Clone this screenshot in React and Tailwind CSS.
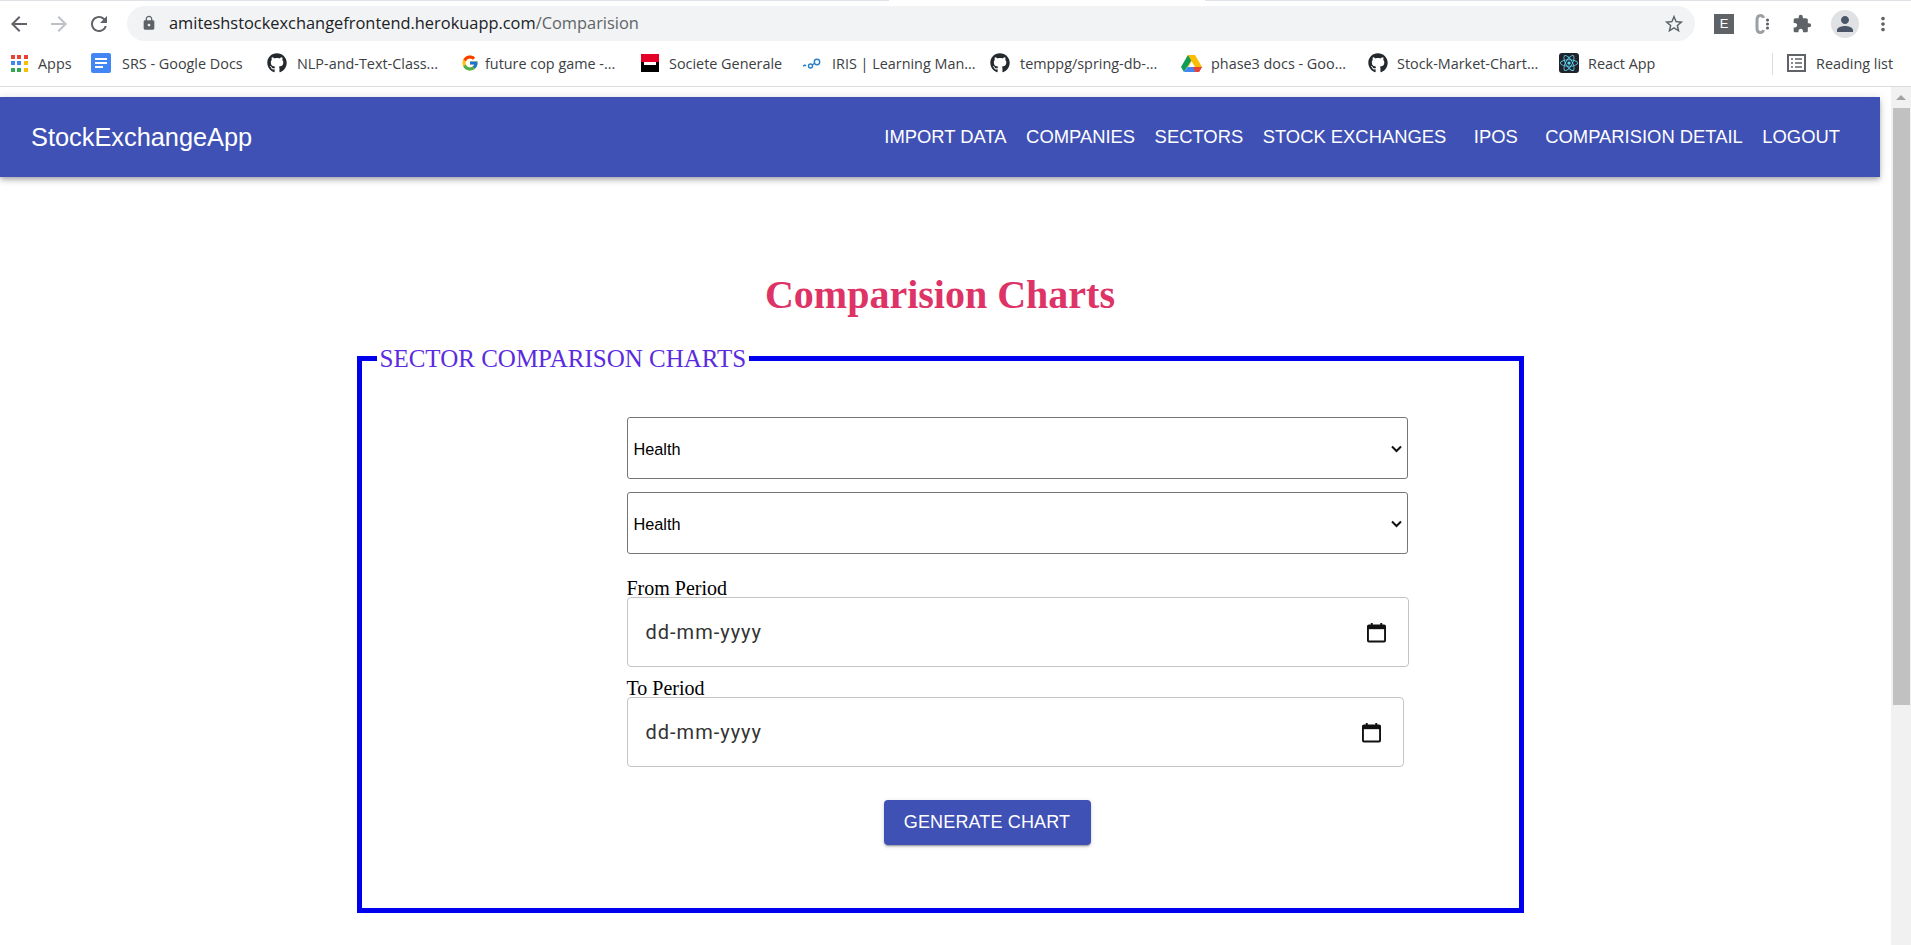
import { FaGithub, FaReact } from "react-icons/fa";
import { FcGoogle } from "react-icons/fc";
import {
  MdArrowBack,
  MdArrowForward,
  MdRefresh,
  MdLock,
  MdStarBorder,
  MdExtension,
  MdPerson,
  MdMoreVert,
} from "react-icons/md";

function AppsIcon() {
  const colors = ["#ea4335", "#ea4335", "#ea4335", "#4285f4", "#4285f4", "#fbbc04", "#34a853", "#34a853", "#fbbc04"];
  return (
    <div className="grid grid-cols-3 gap-[2px] w-[17px] h-[17px]">
      {colors.map((c, i) => (
        <span key={i} className="w-[4px] h-[4px]" style={{ backgroundColor: c }} />
      ))}
    </div>
  );
}

function DocsIcon() {
  return (
    <div className="w-[20px] h-[20px] rounded-[2px] bg-[#4285f4] flex flex-col justify-center gap-[2px] pl-[4px]">
      <span className="w-[12px] h-[2px] bg-white" />
      <span className="w-[12px] h-[2px] bg-white" />
      <span className="w-[8px] h-[2px] bg-white" />
    </div>
  );
}

function SocGenIcon() {
  return (
    <div className="w-[18px] h-[18px] flex flex-col">
      <span className="h-[8px] bg-[#e60028]" />
      <div className="h-[10px] bg-black">
        <div className="h-[3px] bg-white mx-[3px]" />
      </div>
    </div>
  );
}

function IrisIcon() {
  return (
    <svg width="20" height="20" viewBox="0 0 20 20" fill="none" stroke="#2a7fc9" strokeWidth="1.4">
      <path d="M1 13l2-1 1 1" />
      <circle cx="8.5" cy="13" r="2" />
      <circle cx="15" cy="9" r="2.7" />
      <path d="M10.3 12l2.3-1.7" />
    </svg>
  );
}

function DriveIcon() {
  return (
    <svg width="21" height="19" viewBox="0 0 21 19">
      <path d="M7 1h7l-3.5 6.5L7 13.5 3.5 7.5z" fill="#fbbc04" />
      <path d="M7 1L0 13l3 5 7.5-12z" fill="#0f9d58" />
      <path d="M14 1l7 12h-7L7 1z" fill="#fbbc04" />
      <path d="M6.5 13H21l-3 5H3z" fill="#4285f4" />
      <path d="M21 13l-3 5H14l-2-5z" fill="#ea4335" />
    </svg>
  );
}

function ReactIcon() {
  return (
    <div className="w-[20px] h-[20px] rounded-[3px] bg-[#20232a] flex items-center justify-center">
      <FaReact size={18} color="#61dafb" />
    </div>
  );
}

function CalendarIcon() {
  return (
    <svg width="19" height="21" viewBox="0 0 20 21" fill="none">
      <rect x="1" y="3" width="18" height="17" rx="1" stroke="#111" strokeWidth="2" />
      <rect x="1" y="3" width="18" height="4" fill="#111" />
      <rect x="4" y="0.5" width="2" height="3" fill="#111" />
      <rect x="14" y="0.5" width="2" height="3" fill="#111" />
    </svg>
  );
}

function CExtensionIcon() {
  return (
    <svg width="20" height="22" viewBox="0 0 20 22" fill="none">
      <path d="M10.500 5C10 3 9 2.500 7.500 2.500 5 2.500 4 4.500 4 7v8c0 2.500 1 4.500 3.500 4.500 1.500 0 2.500-.5 3-2.500" stroke="#9aa0a6" strokeWidth="3" />
      <circle cx="14.500" cy="7" r="1.600" fill="#5f6368" />
      <circle cx="14.500" cy="11" r="1.600" fill="#5f6368" />
      <circle cx="14.500" cy="15" r="1.600" fill="#5f6368" />
    </svg>
  );
}

const bookmarks = [
  { label: "Apps", icon: <AppsIcon />, box: "w-[80px]", gap: "gap-[10px]" },
  { label: "SRS - Google Docs", icon: <DocsIcon />, box: "w-[176px]", gap: "gap-[11px]" },
  { label: "NLP-and-Text-Class...", icon: <FaGithub size={20} color="#24292e" />, box: "w-[194px]", gap: "gap-[10px]" },
  { label: "future cop game -...", icon: <FcGoogle size={18} />, box: "w-[180px]", gap: "gap-[6px]" },
  { label: "Societe Generale", icon: <SocGenIcon />, box: "w-[161px]", gap: "gap-[10px]" },
  { label: "IRIS | Learning Man...", icon: <IrisIcon />, box: "w-[188px]", gap: "gap-[10px]" },
  { label: "temppg/spring-db-...", icon: <FaGithub size={20} color="#24292e" />, box: "w-[191px]", gap: "gap-[10px]" },
  { label: "phase3 docs - Goo...", icon: <DriveIcon />, box: "w-[187px]", gap: "gap-[9px]" },
  { label: "Stock-Market-Chart...", icon: <FaGithub size={20} color="#24292e" />, box: "w-[191px]", gap: "gap-[9px]" },
  { label: "React App", icon: <ReactIcon />, box: "w-[226px]", gap: "gap-[9px]" },
];

function BrowserChrome() {
  return (
    <div className="h-[87px] bg-white border-b border-[#dadce0] flex flex-col shrink-0">
      <div className="h-[6px] flex">
        <div className="w-[889px] border-t border-[#dee1e6]" />
        <div className="w-[316px]" />
        <div className="flex-1 border-t border-[#dee1e6]" />
      </div>
      <div className="h-[35px] flex items-center text-[#5f6368]">
        <div className="w-[127px] flex items-center pl-[7px] gap-[16px]">
          <MdArrowBack size={24} />
          <MdArrowForward size={24} className="text-[#bdc1c6]" />
          <MdRefresh size={24} />
        </div>
        <div className="w-[1568px] h-[35px] rounded-full bg-[#f1f3f4] flex items-center justify-between pl-[14px] pr-[10px]">
          <div className="flex items-center gap-[12px]">
            <MdLock size={16} />
            <span className="text-[16.4px] text-[#202124] font-['Open_Sans',sans-serif]">
              amiteshstockexchangefrontend.herokuapp.com<span className="text-[#5f6368]">/Comparision</span>
            </span>
          </div>
          <MdStarBorder size={22} />
        </div>
        <div className="flex items-center pl-[19px] gap-[19px]">
          <div className="w-[20px] h-[20px] bg-[#5f6368] text-white text-[13px] flex items-center justify-center font-['Liberation_Sans',sans-serif]">
            E
          </div>
          <CExtensionIcon />
          <MdExtension size={20} />
          <div className="w-[28px] h-[28px] rounded-full bg-[#dfe1e5] flex items-center justify-center">
            <MdPerson size={24} color="#4a5568" />
          </div>
          <MdMoreVert size={22} className="-ml-[6px]" />
        </div>
      </div>
      <div className="flex-1 flex items-center pl-[11px] text-[14.4px] text-[#3c4043] font-['Open_Sans',sans-serif]">
        {bookmarks.map((b) => (
          <div key={b.label} className={`flex items-center ${b.box} ${b.gap}`}>
            {b.icon}
            <span className="whitespace-nowrap">{b.label}</span>
          </div>
        ))}
        <div className="w-px h-[22px] bg-[#dadce0] -ml-[13px]" />
        <div className="flex items-center gap-[10px] ml-[14px]">
          <svg width="19" height="18" viewBox="0 0 19 18" fill="none" stroke="#5f6368">
            <rect x="1" y="1" width="17" height="16" strokeWidth="2" />
            <path d="M4 5h2M8 5h7M4 9h2M8 9h7M4 13h2M8 13h7" strokeWidth="1.5" />
          </svg>
          <span className="whitespace-nowrap">Reading list</span>
        </div>
      </div>
    </div>
  );
}

function Navbar() {
  return (
    <header className="mt-[10px] w-[1880px] h-[80px] bg-[#3f51b5] text-white flex items-center justify-between pl-[31px] pr-[40px] shadow-[0_2px_4px_-1px_rgba(0,0,0,0.2),0_4px_5px_0_rgba(0,0,0,0.14),0_1px_10px_0_rgba(0,0,0,0.12)]">
      <span className="text-[25.35px] mt-[1px]">StockExchangeApp</span>
      <nav className="flex items-center gap-[19.5px] text-[18.4px]">
        <a>IMPORT DATA</a>
        <a>COMPANIES</a>
        <a>SECTORS</a>
        <a>STOCK EXCHANGES</a>
        <a className="ml-[8px]">IPOS</a>
        <a className="ml-[8px]">COMPARISION DETAIL</a>
        <a>LOGOUT</a>
      </nav>
    </header>
  );
}

function SectorSelect({ className }) {
  return (
    <div className={`relative w-[781px] ${className}`}>
      <select className="w-full h-[62px] appearance-none border border-[#767676] rounded-[3px] bg-white pl-[6px] pr-[4px] pt-[2px] text-[16.3px] text-black font-['Liberation_Sans',sans-serif]">
        <option>Health</option>
      </select>
      <svg className="absolute right-[6px] top-[28px] pointer-events-none" width="11" height="8" viewBox="0 0 11 8" fill="none" stroke="#111" strokeWidth="2">
        <path d="M1 1.500l4.500 4.500 4.500-4.500" />
      </svg>
    </div>
  );
}

function DateField({ label, width, labelMargin }) {
  return (
    <>
      <label className={`block h-[18px] leading-[18px] text-[20px] text-black ${labelMargin}`}>{label}</label>
      <div className={`h-[70px] ${width} border border-[#c4c4c4] rounded-[4px] flex items-center justify-between pl-[18px] pr-[22px]`}>
        <span className="text-[20px] tracking-[1px] text-[#333] font-['Roboto',sans-serif]">dd-mm-yyyy</span>
        <CalendarIcon />
      </div>
    </>
  );
}

function ChartForm() {
  return (
    <fieldset className="w-[1167px] h-[569px] mx-auto mt-[26px] border-[5px] border-[#0000ee] font-['Liberation_Serif',serif]">
      <legend className="ml-[15px] px-[3px] pt-[2px] text-[25px] leading-[26px] text-[#5b2be0]">SECTOR COMPARISON CHARTS</legend>
      <div className="ml-[265px] mt-[45px] w-[790px] flex flex-col">
        <SectorSelect />
        <SectorSelect className="mt-[13px]" />
        <DateField label="From Period" width="w-[782px]" labelMargin="mt-[25px]" />
        <DateField label="To Period" width="w-[777px]" labelMargin="mt-[12px]" />
        <button className="mt-[33px] ml-[257px] w-[207px] h-[45px] rounded-[4px] bg-[#3f51b5] text-white text-[18px] tracking-[0.15px] font-['Liberation_Sans',sans-serif] shadow-[0_3px_1px_-2px_rgba(0,0,0,0.2),0_2px_2px_0_rgba(0,0,0,0.14),0_1px_5px_0_rgba(0,0,0,0.12)]">
          GENERATE CHART
        </button>
      </div>
    </fieldset>
  );
}

function Scrollbar() {
  return (
    <div className="w-[20px] bg-[#f1f1f1] flex flex-col items-center shrink-0">
      <div className="h-[21px] flex items-center justify-center">
        <div className="w-0 h-0 border-x-[5px] border-x-transparent border-b-[5px] border-b-[#a3a3a3]" />
      </div>
      <div className="w-[17px] h-[597px] bg-[#c1c1c1]" />
    </div>
  );
}

export default function App() {
  return (
    <div className="w-[1911px] h-[945px] overflow-hidden bg-white flex flex-col font-['Liberation_Sans',sans-serif]">
      <BrowserChrome />
      <div className="flex-1 flex justify-between min-h-0">
        <main className="w-[1880px]">
          <Navbar />
          <h1 className="mt-[95px] text-center text-[40px] leading-[46px] font-bold text-[#dd3366] font-['Liberation_Serif',serif]">
            Comparision Charts
          </h1>
          <ChartForm />
        </main>
        <Scrollbar />
      </div>
    </div>
  );
}
